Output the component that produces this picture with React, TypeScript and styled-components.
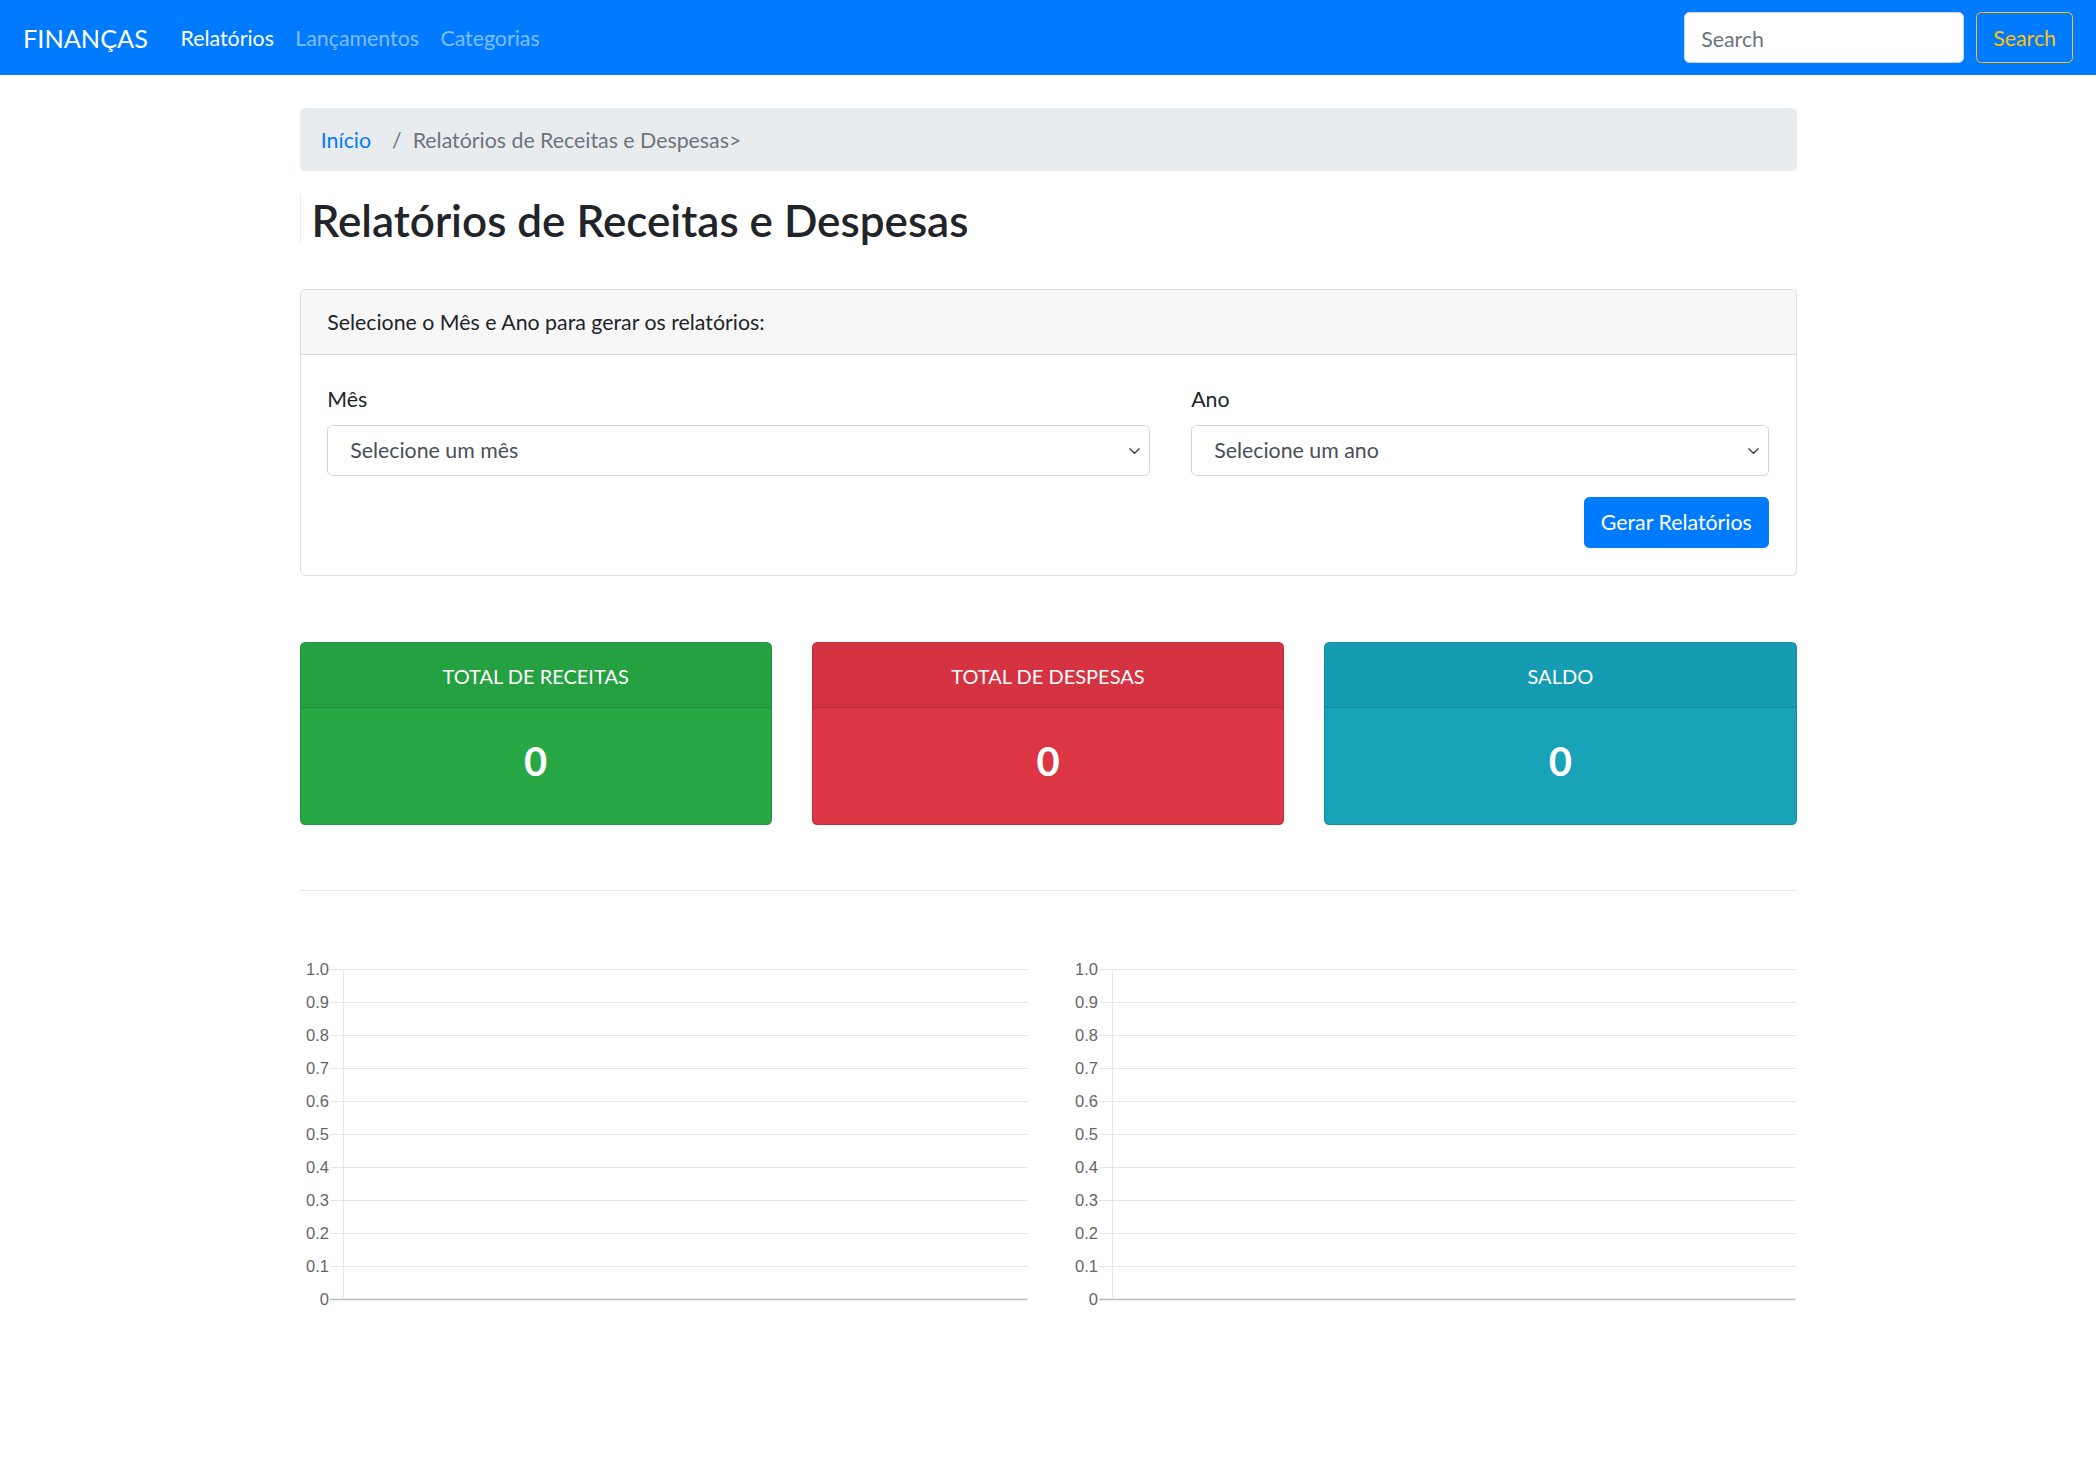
import React from 'react';
import styled, { createGlobalStyle } from 'styled-components';

const GlobalStyle = createGlobalStyle`
	* {
		box-sizing: border-box;
	}
	body {
		margin: 0;
		background: #fff;
		color: #212529;
		font-family: Lato, 'Noto Sans', sans-serif;
		font-size: 21.33px;
		line-height: 1.5;
	}
`;

const Navbar = styled.nav`
	display: flex;
	align-items: center;
	height: 75px;
	padding: 3px 23px 0;
	background: #007bff;
`;

const Brand = styled.a`
	color: #fff;
	font-size: 25.3px;
	margin-right: 22px;
	text-decoration: none;
`;

const NavLink = styled.a<{ $active?: boolean }>`
	padding: 0 10.7px;
	color: ${(p) => (p.$active ? '#fff' : 'rgba(255,255,255,.5)')};
	text-decoration: none;
`;

const SearchForm = styled.form`
	display: flex;
	gap: 12px;
	margin: -3px 0 0 auto;
`;

const SearchInput = styled.input`
	width: 280px;
	height: 51px;
	padding: 2px 16px 0;
	border: 1px solid #ced4da;
	border-radius: 5.3px;
	font: inherit;
	color: #495057;
	&::placeholder {
		color: #6c757d;
	}
`;

const OutlineButton = styled.button`
	height: 51px;
	padding: 2px 16px 0;
	border: 1px solid #ffc107;
	border-radius: 5.3px;
	background: transparent;
	color: #ffc107;
	font: inherit;
`;

const Container = styled.main`
	width: 1497px;
	margin: 33px auto 0;
`;

const Breadcrumb = styled.ol`
	display: flex;
	align-items: center;
	height: 63px;
	margin: 0;
	padding: 2px 21.3px 0;
	list-style: none;
	background: #e9ecef;
	border-radius: 5.3px;
`;

const Crumb = styled.li<{ $active?: boolean }>`
	color: ${(p) => (p.$active ? '#6c757d' : '#007bff')};
	&:not(:first-child)::before {
		content: '/';
		padding: 0 11px 0 21px;
		color: #6c757d;
	}
`;

const TitleBox = styled.div`
	display: flex;
	align-items: center;
	height: 51px;
	margin: 23px 0 44px;
	padding: 2px 0 0 11px;
	border-left: 1px solid #ececec;
`;

const Title = styled.h1`
	margin: 0;
	font-size: 44px;
	font-weight: 600;
	line-height: 1.2;
`;

const Card = styled.section`
	border: 1px solid rgba(0, 0, 0, 0.125);
	border-radius: 5.3px;
	overflow: hidden;
`;

const CardHeader = styled.div`
	display: flex;
	align-items: center;
	height: 65px;
	padding: 2px 26.7px 0;
	background: rgba(0, 0, 0, 0.03);
	border-bottom: 1px solid rgba(0, 0, 0, 0.125);
`;

const CardBody = styled.div`
	padding: 27px 26.7px 26.7px;
`;

const FormRow = styled.div`
	display: grid;
	grid-template-columns: 823px 1fr;
	column-gap: 41px;
`;

const Field = styled.div`
	margin-bottom: 21.3px;
`;

const Label = styled.label`
	display: block;
	padding-top: 2px;
	margin-bottom: 8.7px;
`;

const SelectBox = styled.div`
	display: flex;
	align-items: center;
	justify-content: space-between;
	height: 51px;
	padding: 2px 8px 0 22px;
	border: 1px solid #ced4da;
	border-radius: 5.3px;
	color: #495057;
`;

const Actions = styled.div`
	display: flex;
	justify-content: flex-end;
`;

const PrimaryButton = styled.button`
	height: 51px;
	padding: 2px 16px 0;
	border: 1px solid #007bff;
	border-radius: 5.3px;
	background: #007bff;
	color: #fff;
	font: inherit;
`;

const StatRow = styled.div`
	display: grid;
	grid-template-columns: repeat(3, 1fr);
	gap: 40px;
	margin-top: 66px;
`;

const StatCard = styled.div<{ $bg: string }>`
	height: 183px;
	border: 1px solid rgba(0, 0, 0, 0.125);
	border-radius: 5.3px;
	background: ${(p) => p.$bg};
	color: #fff;
	text-align: center;
	overflow: hidden;
`;

const StatHeader = styled.div`
	display: flex;
	align-items: center;
	justify-content: center;
	height: 65px;
	padding-top: 3px;
	font-size: 20px;
	background: rgba(0, 0, 0, 0.03);
	border-bottom: 1px solid rgba(0, 0, 0, 0.125);
	text-transform: uppercase;
`;

const StatValue = styled.h2`
	margin: 29px 0 0;
	font-size: 40px;
	font-weight: 700;
	line-height: 1.2;
`;

const Divider = styled.hr`
	margin: 65px 0 0;
	border: 0;
	border-top: 1px solid rgba(0, 0, 0, 0.1);
`;

const ChartRow = styled.div`
	display: grid;
	grid-template-columns: 1fr 1fr;
	gap: 40px;
	margin-top: 59px;
`;

const ChartSvg = styled.svg`
	display: block;
	width: 100%;
	height: 370px;
	font-family: 'Liberation Sans', Arial, sans-serif;
`;

const Chevron = () => (
	<svg width="13" height="8" viewBox="0 0 13 8">
		<path d="M1.5 1.5 L6.5 6.3 L11.5 1.5" fill="none" stroke="#444" strokeWidth="1.5" />
	</svg>
);

const ticks = ['1.0', '0.9', '0.8', '0.7', '0.6', '0.5', '0.4', '0.3', '0.2', '0.1', '0'];

const EmptyChart: React.FC<{ axisX: number }> = ({ axisX }) => {
	const top = 19;
	const step = 33;
	const right = 727;
	return (
		<ChartSvg viewBox="0 0 728 370" preserveAspectRatio="none">
			{ticks.map((t, i) => {
				const y = top + i * step + 0.5;
				const last = i === ticks.length - 1;
				return (
					<g key={t}>
						<line x1={axisX - 13} x2={right} y1={y} y2={y} stroke={last ? '#bdbdbd' : '#e6e6e6'} strokeWidth={last ? 1.5 : 1} />
						<text x={axisX - 14} y={y + 5.5} textAnchor="end" fontSize="16.5" fill="#666">
							{t}
						</text>
					</g>
				);
			})}
			<line x1={axisX + 0.5} x2={axisX + 0.5} y1={top} y2={top + 10 * step} stroke="#e6e6e6" />
		</ChartSvg>
	);
};

const stats = [
	{ label: 'Total de Receitas', bg: '#28a745' },
	{ label: 'Total de Despesas', bg: '#dc3545' },
	{ label: 'Saldo', bg: '#17a2b8' }
];

export default function App() {
	return (
		<>
			<GlobalStyle />
			<Navbar>
				<Brand href="#">FINANÇAS</Brand>
				<NavLink href="#" $active>
					Relatórios
				</NavLink>
				<NavLink href="#">Lançamentos</NavLink>
				<NavLink href="#">Categorias</NavLink>
				<SearchForm onSubmit={(e) => e.preventDefault()}>
					<SearchInput placeholder="Search" />
					<OutlineButton type="submit">Search</OutlineButton>
				</SearchForm>
			</Navbar>
			<Container>
				<Breadcrumb>
					<Crumb>Início</Crumb>
					<Crumb $active>Relatórios de Receitas e Despesas&gt;</Crumb>
				</Breadcrumb>
				<TitleBox>
					<Title>Relatórios de Receitas e Despesas</Title>
				</TitleBox>
				<Card>
					<CardHeader>Selecione o Mês e Ano para gerar os relatórios:</CardHeader>
					<CardBody>
						<FormRow>
							<Field>
								<Label>Mês</Label>
								<SelectBox>
									Selecione um mês
									<Chevron />
								</SelectBox>
							</Field>
							<Field>
								<Label>Ano</Label>
								<SelectBox>
									Selecione um ano
									<Chevron />
								</SelectBox>
							</Field>
						</FormRow>
						<Actions>
							<PrimaryButton>Gerar Relatórios</PrimaryButton>
						</Actions>
					</CardBody>
				</Card>
				<StatRow>
					{stats.map((s) => (
						<StatCard key={s.label} $bg={s.bg}>
							<StatHeader>{s.label}</StatHeader>
							<StatValue>0</StatValue>
						</StatCard>
					))}
				</StatRow>
				<Divider />
				<ChartRow>
					<EmptyChart axisX={43} />
					<EmptyChart axisX={44} />
				</ChartRow>
			</Container>
		</>
	);
}
